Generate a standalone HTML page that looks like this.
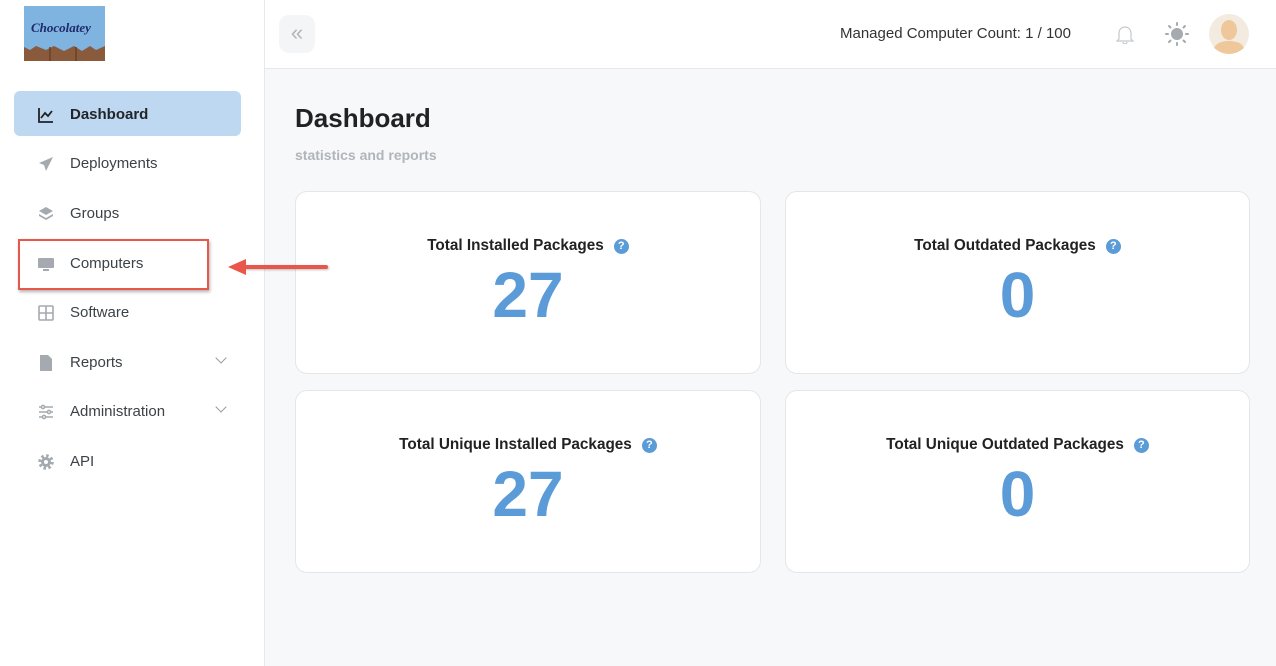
<!DOCTYPE html><html><head><meta charset="utf-8"><style>
*{box-sizing:border-box;margin:0;padding:0}
body{width:1276px;height:666px;overflow:hidden;font-family:"Liberation Sans",sans-serif;background:#f7f8fa;position:relative;color:#212529}
.sb{position:absolute;left:0;top:0;width:265px;height:666px;background:#fff;border-right:1px solid #e6e8eb}
.top{position:absolute;left:265px;top:0;right:0;height:69px;background:#fff;border-bottom:1px solid #e6e8eb}
.nav{position:absolute;left:14px;width:227px;height:45px;display:flex;align-items:center;padding-left:24px;font-size:15px;color:#3d4246;padding-top:2px}
.nav svg{width:16px;height:16px;margin-right:16px}
.card{position:absolute;width:466px;height:183px;background:#fff;border:1px solid #e4e6ea;border-radius:12px;text-align:center}
.card h3{margin-top:45px;font-size:15.3px;font-weight:bold;color:#222}
.q{display:inline-block;width:15px;height:15px;border-radius:50%;background:#5b9bd8;color:#fff;font-size:11px;line-height:15px;margin-left:10px;vertical-align:1px}
.card .n{font-size:64px;font-weight:bold;color:#5b9bd8;margin-top:8px;line-height:64px}
.chev{position:absolute;right:16px;width:8px;height:8px;border-right:1.2px solid #999;border-bottom:1.2px solid #999;transform:rotate(45deg)}
</style></head><body>
<div class="sb">
<svg style="position:absolute;left:24px;top:6px" width="81" height="55" viewBox="0 0 81 55"><rect width="81" height="55" fill="#8a5a3c"/><path d="M0 0H81V40L72 44 66 40 58 45 50 40 40 45 30 40 22 44 12 40 6 44 0 41Z" fill="#7fb3e0"/><path d="M26 41V55M52 41V55" stroke="#6b4028" stroke-width="1.5"/><text x="7" y="26" font-family="Liberation Serif" font-style="italic" font-weight="bold" font-size="13" fill="#1e2a6b">Chocolatey</text></svg>
<div class="nav" style="top:91px;background:#bdd8f0;border-radius:6px;font-weight:bold;color:#212529"><svg viewBox="0 0 16 16" fill="none" stroke="#222" stroke-width="1.8"><path d="M1 1V15H15M3 11L7 6 10 9 14 4"/></svg>Dashboard</div>
<div class="nav" style="top:140px"><svg viewBox="0 0 16 16"><path d="M15 1L1 7 6 9 8 15Z" fill="#a4aab0"/></svg>Deployments</div>
<div class="nav" style="top:190px"><svg viewBox="0 0 16 16" fill="#a4aab0"><path d="M8 1L15 5 8 9 1 5Z"/><path d="M1 8L8 12 15 8V10L8 14 1 10Z"/></svg>Groups</div>
<div class="nav" style="top:240px"><svg viewBox="0 0 16 16" fill="#a4aab0"><rect x="0" y="2" width="16" height="10" rx="1"/><rect x="5" y="13" width="6" height="2"/></svg>Computers</div>
<div style="position:absolute;left:18px;top:239px;width:191px;height:51px;border:2.5px solid #e8574a;box-shadow:1px 2px 3px rgba(0,0,0,.3)"></div>
<div class="nav" style="top:289px"><svg viewBox="0 0 16 16" fill="none" stroke="#a4aab0" stroke-width="1.6"><rect x="1" y="1" width="14" height="14" rx="1"/><path d="M8 1V15M1 8H15"/></svg>Software</div>
<div class="nav" style="top:339px"><svg viewBox="0 0 16 16" fill="#a4aab0"><path d="M2 0H10L14 4V16H2Z"/></svg>Reports<span class="chev" style="top:15px"></span></div>
<div class="nav" style="top:388px"><svg viewBox="0 0 16 16" fill="none" stroke="#a4aab0" stroke-width="1.5"><path d="M1 3H15M1 8H15M1 13H15"/><circle cx="5" cy="3" r="1.6" fill="#fff"/><circle cx="11" cy="8" r="1.6" fill="#fff"/><circle cx="6" cy="13" r="1.6" fill="#fff"/></svg>Administration<span class="chev" style="top:15px"></span></div>
<div class="nav" style="top:438px"><svg viewBox="0 0 16 16"><circle cx="8" cy="8" r="6" fill="none" stroke="#a4aab0" stroke-width="3.5" stroke-dasharray="2.4 2.3"/><circle cx="8" cy="8" r="5" fill="#a4aab0"/><circle cx="8" cy="8" r="2" fill="#fff"/></svg>API</div>
</div>
<div style="position:absolute;left:242px;top:265px;width:86px;height:4px;background:#e8574a;border-radius:2px;box-shadow:1px 1px 2px rgba(0,0,0,.25);z-index:5"></div>
<div style="position:absolute;left:228px;top:259px;width:0;height:0;border-top:8px solid transparent;border-bottom:8px solid transparent;border-right:18px solid #e8574a;z-index:5"></div>
<div class="top">
<div style="position:absolute;left:14px;top:15px;width:36px;height:38px;border-radius:10px;background:#f4f5f7;color:#b0b5ba;font-size:22px;text-align:center;line-height:36px">«</div>
<div style="position:absolute;left:575px;top:25px;font-size:15px;color:#333">Managed Computer Count: 1 / 100</div>
<svg style="position:absolute;left:851px;top:24px" width="18" height="20" viewBox="0 0 18 20" fill="none" stroke="#c5c9cd" stroke-width="1.2"><path d="M3 15V9a6 6 0 0112 0v6l2 2H1z"/><path d="M7 18a2 2 0 004 0"/></svg>
<svg style="position:absolute;left:900px;top:22px" width="24" height="24" viewBox="0 0 24 24" fill="#a4aab0"><circle cx="12" cy="12" r="6"/><g stroke="#a4aab0" stroke-width="2" stroke-linecap="round"><path d="M12 1v2M12 21v2M1 12h2M21 12h2M4 4l1.5 1.5M18.5 18.5L20 20M4 20l1.5-1.5M18.5 5.5L20 4"/></g></svg>
<svg style="position:absolute;left:944px;top:14px" width="40" height="40" viewBox="0 0 40 40"><circle cx="20" cy="20" r="20" fill="#f3ebe0"/><ellipse cx="20" cy="16" rx="8" ry="10" fill="#eec89a"/><path d="M5 34Q8 27 20 27 32 27 35 34 28 40 20 40 12 40 5 34Z" fill="#eec89a"/></svg>
</div>
<div style="position:absolute;left:295px;top:103px;font-size:26px;font-weight:bold;color:#222">Dashboard</div>
<div style="position:absolute;left:295px;top:147px;font-size:14px;font-weight:bold;color:#b0b5ba">statistics and reports</div>
<div class="card" style="left:295px;top:191px"><h3>Total Installed Packages<span class="q">?</span></h3><div class="n">27</div></div>
<div class="card" style="left:785px;top:191px;width:465px"><h3>Total Outdated Packages<span class="q">?</span></h3><div class="n">0</div></div>
<div class="card" style="left:295px;top:390px"><h3>Total Unique Installed Packages<span class="q">?</span></h3><div class="n">27</div></div>
<div class="card" style="left:785px;top:390px;width:465px"><h3>Total Unique Outdated Packages<span class="q">?</span></h3><div class="n">0</div></div>
</body></html>
